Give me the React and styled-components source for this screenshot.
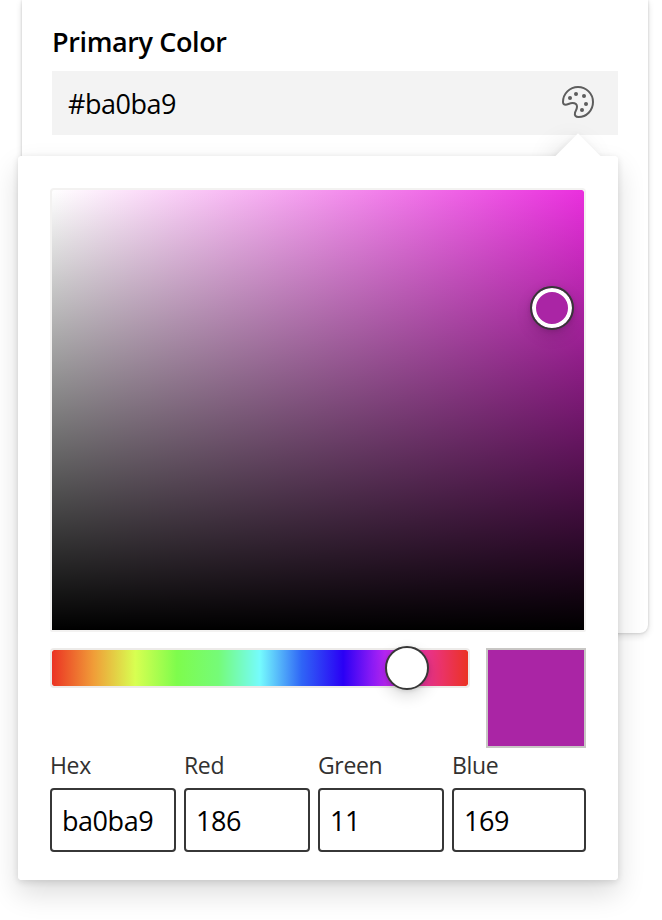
import React from "react";
import styled, { createGlobalStyle } from "styled-components";

const Global = createGlobalStyle`
  * { box-sizing: border-box; }
  html, body { margin: 0; background: #fff; overflow: hidden; }
  body { font-family: "Open Sans", "Noto Sans", sans-serif; color: #000; }
`;

const Page = styled.main`
  position: relative;
  width: 662px;
  height: 920px;
  overflow: hidden;
  padding-left: 22px;
`;

const Card = styled.section`
  width: 626px;
  height: 633px;
  padding: 22px 30px 0;
  background: #fff;
  border-radius: 0 0 8px 8px;
  box-shadow: 0 0 3px rgba(0, 0, 0, 0.18), 0 3px 7px rgba(0, 0, 0, 0.12);
`;

const Title = styled.h2`
  margin: 0 0 9px;
  height: 40px;
  font-size: 27px;
  line-height: 40px;
  font-weight: 600;
  letter-spacing: -0.38px;
`;

const ColorField = styled.div`
  display: flex;
  align-items: flex-start;
  justify-content: space-between;
  height: 64px;
  padding: 15px 24px 0 16px;
  background: #f3f3f3;
`;

const ColorValue = styled.span`
  font-size: 27px;
  line-height: 35px;
  letter-spacing: -0.5px;
`;

const PaletteIcon = styled.svg`
  width: 32px;
  height: 32px;
  color: #5d5d5d;
`;

const Callout = styled.div`
  position: absolute;
  left: 18px;
  top: 156px;
  width: 600px;
  height: 724px;
  padding: 32px;
  border-radius: 4px;
  background: #fff;
  box-shadow: 0 13px 29px rgba(0, 0, 0, 0.14), 0 2px 7px rgba(0, 0, 0, 0.12);
`;

const Beak = styled.div`
  position: absolute;
  left: 544px;
  top: -16px;
  width: 32px;
  height: 32px;
  background: #fff;
  transform: rotate(45deg);
  box-shadow: 0 10px 28px rgba(0, 0, 0, 0.12), 0 2px 7px rgba(0, 0, 0, 0.08);
`;

const BeakCover = styled.div`
  position: absolute;
  inset: 0;
  background: #fff;
  border-radius: 4px;
`;

const Content = styled.div`
  position: relative;
`;

const Spectrum = styled.div`
  position: relative;
  width: 536px;
  height: 444px;
  border: 2px solid #f3f2f1;
  border-radius: 4px 4px 2px 2px;
  background: linear-gradient(to bottom, transparent, #000) padding-box,
    linear-gradient(to right, #fff, #ea2fde) padding-box;
`;

const Thumb = styled.div`
  position: absolute;
  left: ${(p) => p.$x}px;
  top: ${(p) => p.$y}px;
  width: 44px;
  height: 44px;
  border: 2px solid #373737;
  border-radius: 50%;
  background: ${(p) => p.$fill};
  box-shadow: ${(p) => (p.$ring ? "inset 0 0 0 4px #fff, " : "")}0 6px 15px rgba(0, 0, 0, 0.14), 0 1px 4px rgba(0, 0, 0, 0.12);
`;

const SliderRow = styled.div`
  display: flex;
  justify-content: space-between;
  margin-top: 16px;
`;

const HueSlider = styled.div`
  position: relative;
  width: 420px;
  height: 40px;
  border: 2px solid #edebe9;
  border-radius: 4px;
  background: linear-gradient(
    to right,
    #eb3323 0%,
    #f09d38 10%,
    #d8ff51 20%,
    #7efc4c 30%,
    #75fb78 40%,
    #75fbfd 50%,
    #2f65f6 60%,
    #2a00f5 70%,
    #b526f4 80%,
    #ea3390 90%,
    #eb3323 100%
  ) padding-box;
`;

const Swatch = styled.div`
  width: 100px;
  height: 100px;
  border: 2px solid #c8c6c4;
  background: #aa25a5;
`;

const Fields = styled.div`
  display: grid;
  grid-template-columns: 126px 126px 126px 134px;
  column-gap: 8px;
`;

const Label = styled.label`
  display: block;
  height: 40px;
  color: #323130;
  font-size: 23px;
  line-height: 35px;
  letter-spacing: -0.35px;
`;

const Input = styled.input`
  display: block;
  width: 100%;
  height: 64px;
  padding: 0 10px;
  border: 2px solid #373737;
  border-radius: 4px;
  outline: none;
  background: #fff;
  color: #000;
  font: 27px "Open Sans", "Noto Sans", sans-serif;
  letter-spacing: -0.45px;
`;

const channels = [
  ["Hex", "ba0ba9"],
  ["Red", "186"],
  ["Green", "11"],
  ["Blue", "169"],
];

function Palette() {
  return (
    <PaletteIcon viewBox="0 0 32 32" fill="none" aria-hidden="true">
      <path
        d="M1 16C1 7.7 7.7 1 16 1S31 7.7 31 16c0 8.5-6.6 15-14.5 15-2.9 0-4.1-1.8-3.5-4.2.5-2 2-3.5 2-6.1 0-2.4-1.8-3.7-4.5-3.7-3 0-4.7 1.7-6.8 1.7C1.8 18.7 1 17.8 1 16Z"
        stroke="currentColor"
        strokeWidth="2"
      />
      <g fill="currentColor">
        <circle cx="8" cy="12" r="2" />
        <circle cx="14" cy="8" r="2" />
        <circle cx="22" cy="10" r="2" />
        <circle cx="24" cy="18" r="2" />
        <circle cx="20" cy="24" r="2" />
      </g>
    </PaletteIcon>
  );
}

export default function App() {
  return (
    <>
      <Global />
      <Page>
        <Card>
          <Title>Primary Color</Title>
          <ColorField>
            <ColorValue>#ba0ba9</ColorValue>
            <Palette />
          </ColorField>
        </Card>
        <Callout>
          <Beak />
          <BeakCover />
          <Content>
            <Spectrum>
              <Thumb $x={478} $y={96} $fill="#aa25a5" $ring />
            </Spectrum>
            <SliderRow>
              <HueSlider>
                <Thumb $x={333} $y={-4} $fill="#fff" />
              </HueSlider>
              <Swatch />
            </SliderRow>
            <Fields>
              {channels.map(([name, value]) => (
                <div key={name}>
                  <Label htmlFor={name}>{name}</Label>
                  <Input id={name} defaultValue={value} />
                </div>
              ))}
            </Fields>
          </Content>
        </Callout>
      </Page>
    </>
  );
}
